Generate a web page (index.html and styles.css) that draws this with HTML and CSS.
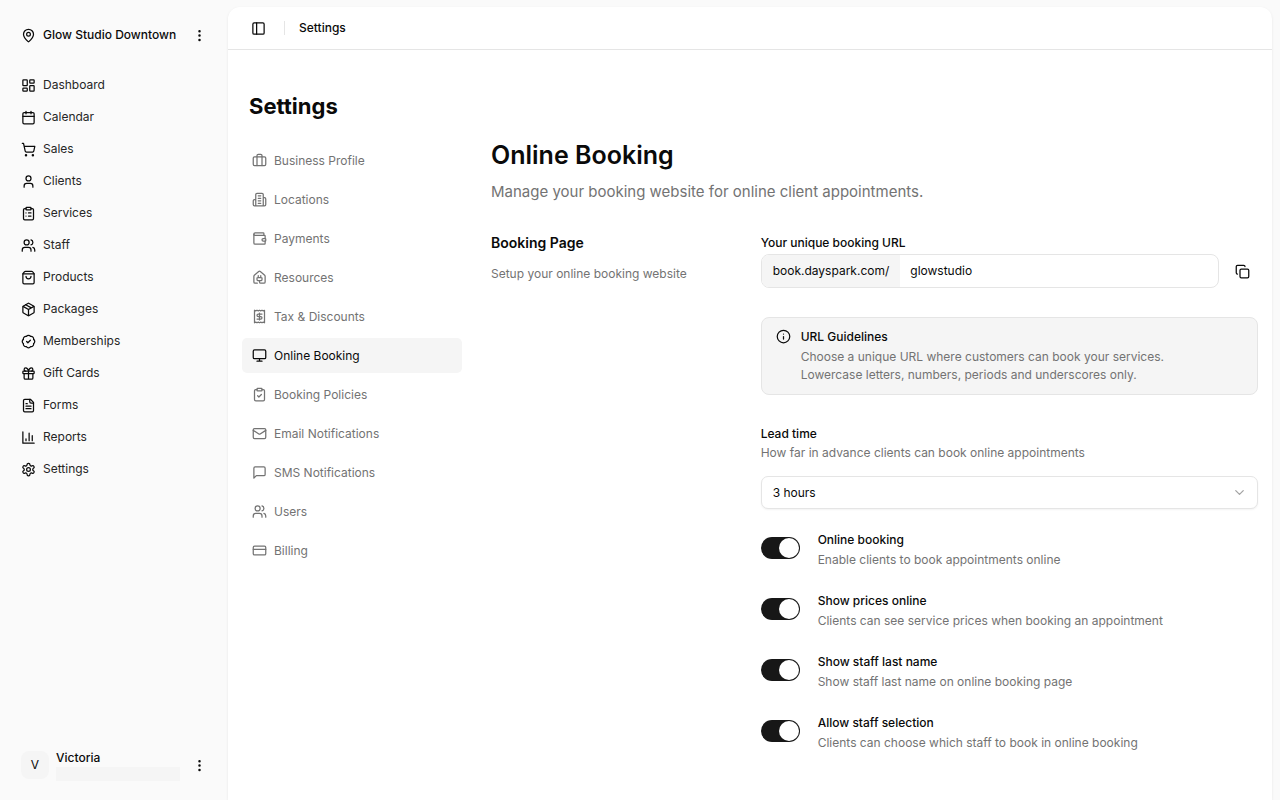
FILE: index.html
```html
<!DOCTYPE html>
<html lang="en">
<head>
    <meta charset="utf-8">
    <meta name="viewport" content="width=device-width, initial-scale=1">
    <title>Online Booking - Settings</title>
    <link rel="stylesheet" href="styles.css">
</head>
<body>
    <!-- Icon sprite -->
    <svg class="sprite" aria-hidden="true">
        <symbol id="i-pin" viewBox="0 0 24 24"><path d="M20 10c0 4.993-5.539 10.193-7.399 11.799a1 1 0 0 1-1.202 0C9.539 20.193 4 14.993 4 10a8 8 0 0 1 16 0"/><circle cx="12" cy="10" r="3"/></symbol>
        <symbol id="i-more" viewBox="0 0 24 24"><circle cx="12" cy="12" r="1"/><circle cx="12" cy="5" r="1"/><circle cx="12" cy="19" r="1"/></symbol>
        <symbol id="i-dashboard" viewBox="0 0 24 24"><rect width="7" height="9" x="3" y="3" rx="1"/><rect width="7" height="5" x="14" y="3" rx="1"/><rect width="7" height="9" x="14" y="12" rx="1"/><rect width="7" height="5" x="3" y="16" rx="1"/></symbol>
        <symbol id="i-calendar" viewBox="0 0 24 24"><path d="M8 2v4M16 2v4M3 10h18"/><rect width="18" height="18" x="3" y="4" rx="2"/></symbol>
        <symbol id="i-cart" viewBox="0 0 24 24"><circle cx="8" cy="21" r="1"/><circle cx="19" cy="21" r="1"/><path d="M2.05 2.05h2l2.66 12.42a2 2 0 0 0 2 1.58h9.78a2 2 0 0 0 1.95-1.57l1.65-7.43H5.12"/></symbol>
        <symbol id="i-user" viewBox="0 0 24 24"><circle cx="12" cy="7" r="4"/><path d="M19 21v-2a4 4 0 0 0-4-4H9a4 4 0 0 0-4 4v2"/></symbol>
        <symbol id="i-clipboard-list" viewBox="0 0 24 24"><rect width="8" height="4" x="8" y="2" rx="1"/><path d="M16 4h2a2 2 0 0 1 2 2v14a2 2 0 0 1-2 2H6a2 2 0 0 1-2-2V6a2 2 0 0 1 2-2h2M12 11h4M12 16h4M8 11h.01M8 16h.01"/></symbol>
        <symbol id="i-users" viewBox="0 0 24 24"><path d="M16 21v-2a4 4 0 0 0-4-4H6a4 4 0 0 0-4 4v2"/><circle cx="9" cy="7" r="4"/><path d="M22 21v-2a4 4 0 0 0-3-3.870M16 3.130a4 4 0 0 1 0 7.750"/></symbol>
        <symbol id="i-bag" viewBox="0 0 24 24"><path d="M16 10a4 4 0 0 1-8 0M3.103 6.034h17.794"/><path d="M3.4 5.467a2 2 0 0 0-.4 1.2V20a2 2 0 0 0 2 2h14a2 2 0 0 0 2-2V6.667a2 2 0 0 0-.4-1.2l-2-2.667A2 2 0 0 0 17 2H7a2 2 0 0 0-1.6.8z"/></symbol>
        <symbol id="i-package" viewBox="0 0 24 24"><path d="M11 21.73a2 2 0 0 0 2 0l7-4A2 2 0 0 0 21 16V8a2 2 0 0 0-1-1.73l-7-4a2 2 0 0 0-2 0l-7 4A2 2 0 0 0 3 8v8a2 2 0 0 0 1 1.73zM12 22V12"/><path d="M3.29 7 12 12l8.71-5M7.5 4.27l9 5.15"/></symbol>
        <symbol id="i-badge" viewBox="0 0 24 24"><path d="M3.85 8.62a4 4 0 0 1 4.78-4.77 4 4 0 0 1 6.74 0 4 4 0 0 1 4.78 4.78 4 4 0 0 1 0 6.74 4 4 0 0 1-4.77 4.78 4 4 0 0 1-6.75 0 4 4 0 0 1-4.78-4.77 4 4 0 0 1 0-6.76Z"/><path d="m9 12 2 2 4-4"/></symbol>
        <symbol id="i-gift" viewBox="0 0 24 24"><rect x="3" y="8" width="18" height="4" rx="1"/><path d="M12 8v13M19 12v7a2 2 0 0 1-2 2H7a2 2 0 0 1-2-2v-7M7.5 8a2.5 2.5 0 0 1 0-5A4.8 8 0 0 1 12 8a4.8 8 0 0 1 4.5-5 2.5 2.5 0 0 1 0 5"/></symbol>
        <symbol id="i-file" viewBox="0 0 24 24"><path d="M15 2H6a2 2 0 0 0-2 2v16a2 2 0 0 0 2 2h12a2 2 0 0 0 2-2V7Z"/><path d="M14 2v4a2 2 0 0 0 2 2h4M10 9H8M16 13H8M16 17H8"/></symbol>
        <symbol id="i-chart" viewBox="0 0 24 24"><path d="M3 3v18h18M18 17V9M13 17V5M8 17v-3"/></symbol>
        <symbol id="i-gear" viewBox="0 0 24 24"><path d="M12.22 2h-.44a2 2 0 0 0-2 2v.18a2 2 0 0 1-1 1.73l-.43.25a2 2 0 0 1-2 0l-.15-.08a2 2 0 0 0-2.73.73l-.22.38a2 2 0 0 0 .73 2.73l.15.1a2 2 0 0 1 1 1.72v.51a2 2 0 0 1-1 1.74l-.15.09a2 2 0 0 0-.73 2.73l.22.38a2 2 0 0 0 2.73.73l.15-.08a2 2 0 0 1 2 0l.43.25a2 2 0 0 1 1 1.73V20a2 2 0 0 0 2 2h.44a2 2 0 0 0 2-2v-.18a2 2 0 0 1 1-1.73l.43-.25a2 2 0 0 1 2 0l.15.08a2 2 0 0 0 2.73-.73l.22-.39a2 2 0 0 0-.73-2.73l-.15-.08a2 2 0 0 1-1-1.74v-.5a2 2 0 0 1 1-1.74l.15-.09a2 2 0 0 0 .73-2.73l-.22-.38a2 2 0 0 0-2.73-.73l-.15.08a2 2 0 0 1-2 0l-.43-.25a2 2 0 0 1-1-1.73V4a2 2 0 0 0-2-2z"/><circle cx="12" cy="12" r="3"/></symbol>
        <symbol id="i-panel" viewBox="0 0 24 24"><rect width="18" height="18" x="3" y="3" rx="2"/><path d="M9 3v18"/></symbol>
        <symbol id="i-briefcase" viewBox="0 0 24 24"><path d="M16 20V4a2 2 0 0 0-2-2h-4a2 2 0 0 0-2 2v16"/><rect width="20" height="14" x="2" y="6" rx="2"/></symbol>
        <symbol id="i-building" viewBox="0 0 24 24"><path d="M6 22V4a2 2 0 0 1 2-2h8a2 2 0 0 1 2 2v18ZM6 12H4a2 2 0 0 0-2 2v6a2 2 0 0 0 2 2h2M18 9h2a2 2 0 0 1 2 2v9a2 2 0 0 1-2 2h-2M10 6h4M10 10h4M10 14h4M10 18h4"/></symbol>
        <symbol id="i-wallet" viewBox="0 0 24 24"><path d="M19 7V4a1 1 0 0 0-1-1H5a2 2 0 0 0 0 4h15a1 1 0 0 1 1 1v4h-3a2 2 0 0 0 0 4h3a1 1 0 0 0 1-1v-2a1 1 0 0 0-1-1"/><path d="M3 5v14a2 2 0 0 0 2 2h15a1 1 0 0 0 1-1v-4"/></symbol>
        <symbol id="i-house-plug" viewBox="0 0 24 24"><path d="M10 12V8.964M14 12V8.964M15 12a1 1 0 0 1 1 1v2a2 2 0 0 1-2 2h-4a2 2 0 0 1-2-2v-2a1 1 0 0 1 1-1z"/><path d="M8.5 21H5a2 2 0 0 1-2-2v-9a2 2 0 0 1 .709-1.528l7-6a2 2 0 0 1 2.582 0l7 6A2 2 0 0 1 21 10v9a2 2 0 0 1-2 2h-5a2 2 0 0 1-2-2v-2"/></symbol>
        <symbol id="i-receipt" viewBox="0 0 24 24"><path d="M4 2v20l2-1 2 1 2-1 2 1 2-1 2 1 2-1 2 1V2l-2 1-2-1-2 1-2-1-2 1-2-1-2 1Z"/><path d="M16 8h-6a2 2 0 1 0 0 4h4a2 2 0 1 1 0 4H8M12 17.500V6.500"/></symbol>
        <symbol id="i-monitor" viewBox="0 0 24 24"><rect width="20" height="14" x="2" y="3" rx="2"/><path d="M8 21h8M12 17v4"/></symbol>
        <symbol id="i-clipboard-check" viewBox="0 0 24 24"><rect width="8" height="4" x="8" y="2" rx="1"/><path d="M16 4h2a2 2 0 0 1 2 2v14a2 2 0 0 1-2 2H6a2 2 0 0 1-2-2V6a2 2 0 0 1 2-2h2M9 14l2 2 4-4"/></symbol>
        <symbol id="i-mail" viewBox="0 0 24 24"><rect width="20" height="16" x="2" y="4" rx="2"/><path d="m22 7-8.970 5.700a1.940 1.940 0 0 1-2.060 0L2 7"/></symbol>
        <symbol id="i-message" viewBox="0 0 24 24"><path d="M21 15a2 2 0 0 1-2 2H7l-4 4V5a2 2 0 0 1 2-2h14a2 2 0 0 1 2 2z"/></symbol>
        <symbol id="i-card" viewBox="0 0 24 24"><rect width="20" height="14" x="2" y="5" rx="2"/><path d="M2 10h20"/></symbol>
        <symbol id="i-copy" viewBox="0 0 24 24"><rect width="14" height="14" x="8" y="8" rx="2"/><path d="M4 16c-1.100 0-2-.9-2-2V4c0-1.100.9-2 2-2h10c1.100 0 2 .9 2 2"/></symbol>
        <symbol id="i-info" viewBox="0 0 24 24"><circle cx="12" cy="12" r="10"/><path d="M12 16v-4M12 8h.01"/></symbol>
        <symbol id="i-chevron" viewBox="0 0 24 24"><path d="m6 9 6 6 6-6"/></symbol>
    </svg>

    <div class="app">
        <aside class="sidebar">
            <button type="button" class="location">
                <svg class="icon"><use href="#i-pin"/></svg>
                <span class="grow">Glow Studio Downtown</span>
                <svg class="icon"><use href="#i-more"/></svg>
            </button>

            <nav class="main-nav" aria-label="Main">
                <a href="#"><svg class="icon"><use href="#i-dashboard"/></svg>Dashboard</a>
                <a href="#"><svg class="icon"><use href="#i-calendar"/></svg>Calendar</a>
                <a href="#"><svg class="icon"><use href="#i-cart"/></svg>Sales</a>
                <a href="#"><svg class="icon"><use href="#i-user"/></svg>Clients</a>
                <a href="#"><svg class="icon"><use href="#i-clipboard-list"/></svg>Services</a>
                <a href="#"><svg class="icon"><use href="#i-users"/></svg>Staff</a>
                <a href="#"><svg class="icon"><use href="#i-bag"/></svg>Products</a>
                <a href="#"><svg class="icon"><use href="#i-package"/></svg>Packages</a>
                <a href="#"><svg class="icon"><use href="#i-badge"/></svg>Memberships</a>
                <a href="#"><svg class="icon"><use href="#i-gift"/></svg>Gift Cards</a>
                <a href="#"><svg class="icon"><use href="#i-file"/></svg>Forms</a>
                <a href="#"><svg class="icon"><use href="#i-chart"/></svg>Reports</a>
                <a href="#"><svg class="icon"><use href="#i-gear"/></svg>Settings</a>
            </nav>

            <button type="button" class="account">
                <span class="avatar">V</span>
                <span class="grow account-info">
                    <span class="account-name">Victoria</span>
                    <span class="account-email"></span>
                </span>
                <svg class="icon"><use href="#i-more"/></svg>
            </button>
        </aside>

        <main class="panel">
            <header class="topbar">
                <button type="button" class="icon-button" aria-label="Toggle sidebar">
                    <svg class="icon"><use href="#i-panel"/></svg>
                </button>
                <span class="divider"></span>
                <span class="crumb">Settings</span>
            </header>

            <div class="content">
                <h1>Settings</h1>
                <div class="layout">
                    <nav class="settings-nav" aria-label="Settings">
                        <a href="#"><svg class="icon"><use href="#i-briefcase"/></svg>Business Profile</a>
                        <a href="#"><svg class="icon"><use href="#i-building"/></svg>Locations</a>
                        <a href="#"><svg class="icon"><use href="#i-wallet"/></svg>Payments</a>
                        <a href="#"><svg class="icon"><use href="#i-house-plug"/></svg>Resources</a>
                        <a href="#"><svg class="icon"><use href="#i-receipt"/></svg>Tax &amp; Discounts</a>
                        <a href="#" class="active" aria-current="page"><svg class="icon"><use href="#i-monitor"/></svg>Online Booking</a>
                        <a href="#"><svg class="icon"><use href="#i-clipboard-check"/></svg>Booking Policies</a>
                        <a href="#"><svg class="icon"><use href="#i-mail"/></svg>Email Notifications</a>
                        <a href="#"><svg class="icon"><use href="#i-message"/></svg>SMS Notifications</a>
                        <a href="#"><svg class="icon"><use href="#i-users"/></svg>Users</a>
                        <a href="#"><svg class="icon"><use href="#i-card"/></svg>Billing</a>
                    </nav>

                    <div class="page">
                        <h2>Online Booking</h2>
                        <p class="lead">Manage your booking website for online client appointments.</p>

                        <section class="section">
                            <div>
                                <h3>Booking Page</h3>
                                <p class="muted">Setup your online booking website</p>
                            </div>

                            <form class="fields">
                                <div class="field">
                                    <label for="slug">Your unique booking URL</label>
                                    <div class="url-row">
                                        <div class="url-input">
                                            <span class="prefix">book.dayspark.com/</span>
                                            <input type="text" id="slug" value="glowstudio">
                                        </div>
                                        <button type="button" class="icon-button" aria-label="Copy URL">
                                            <svg class="icon"><use href="#i-copy"/></svg>
                                        </button>
                                    </div>
                                </div>

                                <div class="alert">
                                    <svg class="icon"><use href="#i-info"/></svg>
                                    <div>
                                        <strong>URL Guidelines</strong>
                                        <p class="muted">Choose a unique URL where customers can book your services.<br>Lowercase letters, numbers, periods and underscores only.</p>
                                    </div>
                                </div>

                                <div class="field">
                                    <label for="lead_time">Lead time</label>
                                    <p class="muted">How far in advance clients can book online appointments</p>
                                    <div class="select">
                                        <select id="lead_time">
                                            <option>1 hour</option>
                                            <option selected>3 hours</option>
                                            <option>6 hours</option>
                                        </select>
                                        <svg class="icon"><use href="#i-chevron"/></svg>
                                    </div>
                                </div>

                                <div class="switches">
                                    <div class="switch-row">
                                        <input type="checkbox" role="switch" id="online" aria-describedby="online_desc" checked>
                                        <div>
                                            <label for="online">Online booking</label>
                                            <p class="muted" id="online_desc">Enable clients to book appointments online</p>
                                        </div>
                                    </div>
                                    <div class="switch-row">
                                        <input type="checkbox" role="switch" id="prices" aria-describedby="prices_desc" checked>
                                        <div>
                                            <label for="prices">Show prices online</label>
                                            <p class="muted" id="prices_desc">Clients can see service prices when booking an appointment</p>
                                        </div>
                                    </div>
                                    <div class="switch-row">
                                        <input type="checkbox" role="switch" id="last_name" aria-describedby="last_name_desc" checked>
                                        <div>
                                            <label for="last_name">Show staff last name</label>
                                            <p class="muted" id="last_name_desc">Show staff last name on online booking page</p>
                                        </div>
                                    </div>
                                    <div class="switch-row">
                                        <input type="checkbox" role="switch" id="selection" aria-describedby="selection_desc" checked>
                                        <div>
                                            <label for="selection">Allow staff selection</label>
                                            <p class="muted" id="selection_desc">Clients can choose which staff to book in online booking</p>
                                        </div>
                                    </div>
                                </div>
                            </form>
                        </section>
                    </div>
                </div>
            </div>
        </main>
    </div>
</body>
</html>
```

FILE: styles.css
```css
:root {
    --bg: #fafafa;
    --panel: #ffffff;
    --text: #0a0a0a;
    --muted: #737373;
    --fill: #f5f5f5;
    --border: #e5e5e5;
    --primary: #171717;
}

* {
    box-sizing: border-box;
}

body {
    margin: 0;
    background-color: var(--bg);
    color: var(--text);
    font-family: Inter, "Liberation Sans", sans-serif;
    font-size: 12px;
    line-height: 18px;
}

h1, h2, h3, p {
    margin: 0;
}

a {
    color: inherit;
    text-decoration: none;
}

button, input, select {
    font: inherit;
    color: inherit;
}

button {
    background: none;
    border: none;
    padding: 0;
    cursor: pointer;
}

label, strong {
    font-weight: 500;
}

.sprite {
    display: none;
}

.icon {
    width: 15px;
    height: 15px;
    flex-shrink: 0;
    fill: none;
    stroke: currentColor;
    stroke-width: 2;
    stroke-linecap: round;
    stroke-linejoin: round;
}

.grow {
    flex: 1;
}

.muted {
    color: var(--muted);
}

.app {
    display: flex;
    min-height: 100vh;
}

/* Sidebar */
.sidebar {
    position: sticky;
    top: 0;
    width: 228px;
    height: 100vh;
    flex-shrink: 0;
    display: flex;
    flex-direction: column;
    padding: 14px;
}

.location, .account {
    display: flex;
    align-items: center;
    gap: 7px;
    height: 42px;
    padding: 0 7px;
    text-align: left;
}

.location {
    font-weight: 500;
}

.main-nav {
    flex: 1;
    display: flex;
    flex-direction: column;
    gap: 4px;
    margin-top: 15px;
}

.main-nav a {
    display: flex;
    align-items: center;
    gap: 7px;
    height: 28px;
    padding: 0 7px;
    color: #262626;
}

.main-nav .icon {
    color: var(--text);
}

.avatar {
    width: 28px;
    height: 28px;
    border-radius: 8px;
    background-color: var(--fill);
    line-height: 28px;
    text-align: center;
}

.account-name {
    display: block;
    font-weight: 500;
}

.account-email {
    display: block;
    width: 124px;
    height: 14px;
    background-color: var(--fill);
}

/* Main panel */
.panel {
    flex: 1;
    min-width: 0;
    margin: 7px 8px 0 0;
    background-color: var(--panel);
    border-radius: 12px 12px 0 0;
    box-shadow: 0 1px 3px rgba(0, 0, 0, 0.08);
}

.topbar {
    display: flex;
    align-items: center;
    height: 43px;
    padding: 0 14px;
    border-bottom: 1px solid var(--border);
}

.icon-button {
    display: flex;
    align-items: center;
    justify-content: center;
    width: 32px;
    height: 32px;
}

.divider {
    width: 1px;
    height: 14px;
    margin: 0 14px 0 10px;
    background-color: var(--border);
}

.crumb {
    font-weight: 500;
}

.content {
    padding: 42px 14px;
}

h1 {
    padding-left: 7px;
    font-size: 22px;
    line-height: 28px;
    font-weight: 700;
}

.layout {
    display: flex;
    gap: 29px;
    margin-top: 19px;
}

.settings-nav {
    width: 220px;
    flex-shrink: 0;
    display: flex;
    flex-direction: column;
    gap: 4px;
    padding-top: 4px;
}

.settings-nav a {
    display: flex;
    align-items: center;
    gap: 7px;
    height: 35px;
    padding: 0 10px;
    border-radius: 5px;
    color: var(--muted);
}

.settings-nav a.active {
    background-color: var(--fill);
    color: var(--text);
}

.page {
    flex: 1;
    min-width: 0;
}

h2 {
    font-size: 25px;
    line-height: 32px;
    font-weight: 600;
}

.lead {
    margin-top: 9px;
    color: var(--muted);
    font-size: 15px;
    line-height: 24px;
}

.section {
    display: grid;
    grid-template-columns: 1fr 2fr;
    gap: 21px;
    margin-top: 29px;
}

h3 {
    margin-bottom: 12px;
    font-size: 14px;
    line-height: 20px;
    font-weight: 600;
}

/* Form */
.fields {
    display: flex;
    flex-direction: column;
    gap: 29px;
}

.field > label {
    display: block;
    line-height: 20px;
}

.url-row {
    display: flex;
    align-items: center;
    gap: 7px;
    margin-top: 1px;
}

.url-input {
    flex: 1;
    display: flex;
    height: 34px;
    overflow: hidden;
    border: 1px solid var(--border);
    border-radius: 8px;
}

.prefix {
    padding: 0 11px;
    background-color: var(--fill);
    line-height: 32px;
}

.url-input input {
    flex: 1;
    min-width: 0;
    border: none;
    outline: none;
    padding: 0 10px;
    background: none;
}

.alert {
    display: flex;
    gap: 10px;
    padding: 10px 14px;
    background-color: var(--fill);
    border: 1px solid var(--border);
    border-radius: 8px;
}

.alert .icon {
    margin-top: 1px;
}

.alert .muted, .switch-row .muted {
    margin-top: 2px;
}

.alert strong, .switch-row label {
    display: block;
}

.select {
    position: relative;
    margin-top: 14px;
}

.select select {
    display: block;
    width: 100%;
    height: 33px;
    padding: 0 11px;
    appearance: none;
    background-color: var(--panel);
    border: 1px solid var(--border);
    border-radius: 7px;
    box-shadow: 0 1px 2px rgba(0, 0, 0, 0.05);
}

.select .icon {
    position: absolute;
    top: 9px;
    right: 11px;
    color: #a3a3a3;
    pointer-events: none;
}

.switches {
    display: flex;
    flex-direction: column;
    gap: 23px;
    margin-top: -7px;
}

.switch-row {
    display: flex;
    gap: 18px;
}

.switch-row input {
    appearance: none;
    flex-shrink: 0;
    width: 39px;
    height: 22px;
    margin: 6px 0 0;
    padding: 1px;
    border-radius: 11px;
    background-color: #d4d4d4;
    cursor: pointer;
}

.switch-row input::before {
    content: "";
    display: block;
    width: 20px;
    height: 20px;
    border-radius: 50%;
    background-color: var(--panel);
}

.switch-row input:checked {
    background-color: var(--primary);
}

.switch-row input:checked::before {
    margin-left: auto;
}

@media (max-width: 900px) {
    .layout {
        flex-direction: column;
    }

    .section {
        grid-template-columns: 1fr;
    }
}
```
